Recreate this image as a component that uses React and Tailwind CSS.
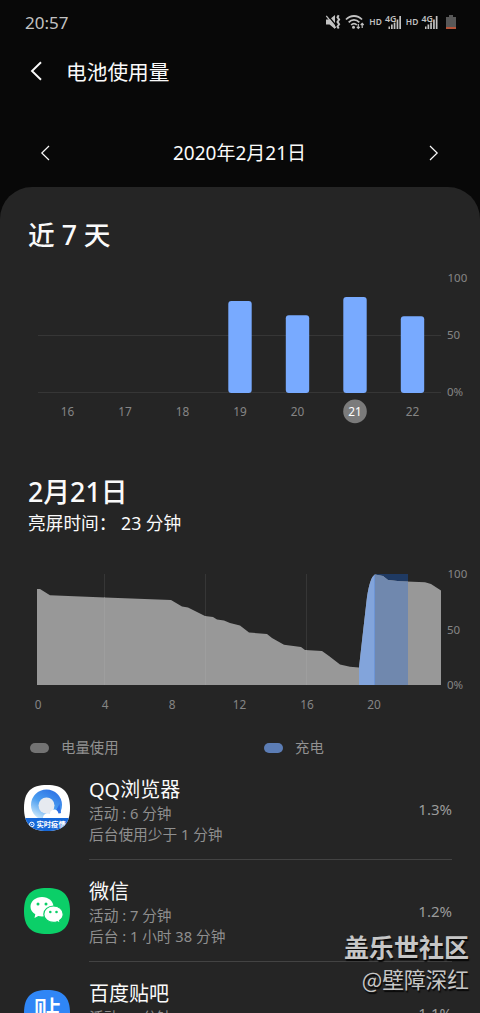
const week = [
  { day: 16, x: 67.5 },
  { day: 17, x: 125 },
  { day: 18, x: 182.5 },
  { day: 19, x: 240, top: 301 },
  { day: 20, x: 297.5, top: 315.3 },
  { day: 21, x: 355, top: 297, active: true },
  { day: 22, x: 412.5, top: 316.3 },
];

const hours = [
  { label: "0", x: 38 },
  { label: "4", x: 105 },
  { label: "8", x: 172 },
  { label: "12", x: 239.5 },
  { label: "16", x: 307 },
  { label: "20", x: 374 },
];

const apps = [
  { name: "QQ浏览器", active: "活动 : 6 分钟", background: "后台使用少于 1 分钟", percent: "1.3%", Icon: QQIcon },
  { name: "微信", active: "活动 : 7 分钟", background: "后台 : 1 小时 38 分钟", percent: "1.2%", Icon: WeChatIcon },
  { name: "百度贴吧", active: "活动 : 2 分钟", percent: "1.1%", Icon: TiebaIcon },
];

export default function App() {
  return (
    <div className="relative w-[480px] h-[1013px] overflow-hidden bg-[#080808] text-[#fafafa] font-['Noto_Sans','Noto_Sans_CJK_SC',sans-serif]">
      <StatusBar />
      <header className="h-12 flex items-center pl-[30px]">
        <Chevron className="w-3 h-5" width={1.9} />
        <h1 className="ml-6 pt-px text-[20.7px] leading-[48px]">电池使用量</h1>
      </header>
      <nav className="mt-[34px] h-12 pb-px flex items-center justify-between pl-10 pr-[41px]">
        <Chevron className="w-[10px] h-4" width={1.5} />
        <span className="text-[19px] leading-[46px]">2020年2月21日</span>
        <Chevron className="w-[10px] h-4 rotate-180" width={1.5} />
      </nav>
      <main className="mt-[10px] rounded-t-[32px] bg-[#252525] h-[826px]">
        <h2 className="pt-[25px] pl-[28px] text-[26.7px] leading-[46px] font-medium">近 7 天</h2>
        <WeekChart />
        <h2 className="mt-[46px] pl-[28px] text-[26.8px] leading-8 font-medium">2月21日</h2>
        <p className="pt-px pl-[28px] text-[17.7px] leading-[29px] whitespace-pre">亮屏时间： 23 分钟</p>
        <DayChart />
        <div className="h-[34px] flex items-center text-[14.4px] text-[#919191]">
          <div className="w-[264px] flex items-center pl-[30px]">
            <i className="w-[19px] h-[10px] rounded-full bg-[#737373]" />
            <span className="ml-3">电量使用</span>
          </div>
          <div className="flex items-center">
            <i className="w-[19px] h-[10px] rounded-full bg-[#5c7db5]" />
            <span className="ml-3">充电</span>
          </div>
        </div>
        <ul className="pt-[11px]">
          {apps.map((app) => (
            <AppRow key={app.name} {...app} />
          ))}
        </ul>
      </main>
      <div className="absolute right-[11px] top-[930px] text-right text-[#c6c6c6] font-['Noto_Sans_CJK_SC',sans-serif] [text-shadow:1px_2px_1px_#080808]">
        <div className="text-[25px] leading-[32px] font-bold">盖乐世社区</div>
        <div className="text-[21.7px] leading-[33px]">@壁障深红</div>
      </div>
    </div>
  );
}

function StatusBar() {
  return (
    <div className="h-[47px] flex justify-between text-[#c2c2c2]">
      <span className="pl-[25px] text-[17px] leading-[45px]">20:57</span>
      <svg width="160" height="47" viewBox="320 0 160 47" fill="none" stroke="currentColor">
        {/* muted, vibrate */}
        <path d="M326 19.5h3.5l5.5-4.5v14l-5.5-4.5H326z" fill="currentColor" stroke="none" />
        <path d="M327.500 15 337 26.500" stroke="#080808" strokeWidth="1.2" />
        <path d="m326.300 15.800 9.500 12" strokeWidth="1.3" />
        <path d="m338.700 15.300-1.200 2 1.600 2.300-1.600 2.300 1.600 2.300-1.600 2.300 1.200 2" strokeWidth="2" />
        {/* wifi */}
        <path d="M346 19.500c4.500-4.700 11.500-4.700 16 0M348.700 22.300c3-3.200 7.600-3.200 10.600 0M351.200 25c1.600-1.700 4-1.700 5.600 0" strokeWidth="1.8" />
        <circle cx="353.5" cy="27.3" r="1.5" fill="currentColor" stroke="none" />
        <path d="M358.300 24v4.300m-1.500-1.500 1.500 1.600 1.500-1.600M362.200 28v-4.600m-1.500 1.600 1.500-1.600 1.500 1.600" strokeWidth="1.2" />
        <Signal x={370} />
        <Signal x={406.5} />
        {/* battery */}
        <path d="M446 17h3v-2h4v2h3v12h-10z" fill="#585858" stroke="none" />
        <path d="M446 27h10v2h-10z" fill="#b6553a" stroke="none" />
      </svg>
    </div>
  );
}

function Signal({ x }) {
  return (
    <g transform={`translate(${x} 0)`} fill="currentColor" stroke="none">
      <text x="-0.7" y="25.2" fontSize="9" fontWeight="600" textLength="12.5" lengthAdjust="spacingAndGlyphs">HD</text>
      <text x="15" y="22" fontSize="9.5" fontWeight="600" textLength="11.5" lengthAdjust="spacingAndGlyphs">4G</text>
      <path d="M18.500 26.500h1.500V29h-1.500zM21 24.500h1.700V29H21zM23.700 22.500h1.700V29h-1.700zM26.600 19.500h1.700V29h-1.700zM29.300 16h1.700v13h-1.700z" />
    </g>
  );
}

function Chevron({ className, width }) {
  return (
    <svg className={className} viewBox="0 0 12 20" fill="none" stroke="#fafafa" strokeWidth={width}>
      <path d="M11 1.200 2 10l9 8.800" />
    </svg>
  );
}

function WeekChart() {
  return (
    <svg width="480" height="172" viewBox="0 258 480 172" className="block" fontSize="11.8" fill="#858585">
      <path d="M38 335.500h403M38 392.500h403" stroke="#363636" />
      <text x="447.5" y="282" fontSize="11.5">100</text>
      <text x="447" y="339" fontSize="11.5">50</text>
      <text x="447" y="396" fontSize="11.5">0%</text>
      {week.map((d) => (
        <g key={d.day}>
          {d.top && <rect x={d.x - 11.7} y={d.top} width="23.4" height={393 - d.top} rx="3" fill="#78aaff" />}
          {d.active && <circle cx={d.x} cy="411.4" r="11.8" fill="#7b7b7b" />}
          <text x={d.x} y="416" textAnchor="middle" fill={d.active ? "#fff" : undefined}>{d.day}</text>
        </g>
      ))}
    </svg>
  );
}

const level =
  "M37 589 L40 589 L50 595.3 L105 597.5 L171 600 L182 606.5 L188 607.5 L205 616 L213 617 L217 619.5 L224 620.5 L230 623 L240 625.5 L249 632.5 L267 634 L272 638 L284 644.8 L301 647 L305 650 L322 651 L329 656 L340 664.5 L350 666.8 L359 667.5 L363 632 L367 597 Q370 577 375 574.5 L383 576 L388 580 L400 581.3 L425 582.2 L431 584 L441 590.5 V685 H37 Z";

function DayChart() {
  return (
    <svg width="480" height="193" viewBox="0 538 480 193" className="block" fontSize="11.8" fill="#858585">
      <defs>
        <clipPath id="level">
          <path d={level} />
        </clipPath>
      </defs>
      <path d="M104.500 574v111M205.500 574v111M306.500 574v111" stroke="#363636" />
      <path d="M375 574h33v111h-33z" fill="#1f3a63" />
      <g clipPath="url(#level)">
        <path d="M37 574h404v111H37z" fill="#989898" />
        <path d="M104.500 574v111M205.500 574v111M306.500 574v111" stroke="#9e9e9e" />
        <path d="M359 574h16v111h-16z" fill="#82a4db" />
        <path d="M375 574h33v111h-33z" fill="#7088ae" />
        <path d="M374.500 574v111" stroke="#6d95d6" />
      </g>
      <text x="447.5" y="578" fontSize="11.5">100</text>
      <text x="447" y="633.5" fontSize="11.5">50</text>
      <text x="447" y="689" fontSize="11.5">0%</text>
      {hours.map((h) => (
        <text key={h.label} x={h.x} y="709" textAnchor="middle">{h.label}</text>
      ))}
    </svg>
  );
}

function AppRow({ name, active, background, percent, Icon }) {
  return (
    <li className="h-[102px] flex pl-6 pr-7">
      <Icon />
      <div className="ml-[19px] h-[84px] flex-1 flex border-b border-[#434343]">
        <div className="pt-px flex-1 text-[14.7px] leading-[21px] text-[#8f8f8f]">
          <div className="text-[20px] leading-[26px] text-[#fafafa]">{name}</div>
          <div>{active}</div>
          {background && <div>{background}</div>}
        </div>
        <span className="text-[15px] leading-[66px] text-[#9b9b9b]">{percent}</span>
      </div>
    </li>
  );
}

const squircle = "M23 0C39 0 46 7 46 23S39 46 23 46 0 39 0 23 7 0 23 0z";

function QQIcon() {
  return (
    <svg className="mt-[9px] shrink-0" width="46" height="46" viewBox="0 0 46 46">
      <defs>
        <clipPath id="sq"><path d={squircle} /></clipPath>
        <linearGradient id="ring" x1="0.8" y1="0" x2="0.25" y2="1">
          <stop offset="0" stopColor="#2b6fe4" />
          <stop offset="0.5" stopColor="#4a9df0" />
          <stop offset="1" stopColor="#d5eefc" />
        </linearGradient>
      </defs>
      <g clipPath="url(#sq)">
        <path d="M0 0h46v46H0z" fill="#fff" />
        <circle cx="22.5" cy="20" r="15.5" fill="url(#ring)" />
        <path d="M29 31l6.500-12 1.500 9z" fill="#2b6fe4" />
        <circle cx="22.5" cy="20.5" r="8" fill="#e6eaf0" />
        <path d="M19 33c0-4 4-5.500 6.500-4.500 2-5.500 8-5.500 9 0 3.500 0 5 2.500 4 5z" fill="#fff" />
        <path d="M0 33h46v13H0z" fill="#1668d8" />
        <circle cx="7.8" cy="39.5" r="2.3" fill="none" stroke="#fff" />
        <circle cx="7.8" cy="39.5" r="0.7" fill="#fff" />
        <text x="12.5" y="42.3" fontSize="7.3" fontWeight="600" fill="#fff">实时疫情</text>
      </g>
    </svg>
  );
}

function WeChatIcon() {
  return (
    <svg className="mt-[10px] shrink-0" width="46" height="46" viewBox="0 0 46 46">
      <path d={squircle} fill="#0bcf68" />
      <path d="M18 9c6.500 0 11.500 4.300 11.500 9.800S24.500 28.500 18 28.500c-1.300 0-2.600-.2-3.700-.5L10.500 30l.8-3.700C8.300 24.500 6.500 21.800 6.500 18.800 6.500 13.300 11.500 9 18 9z" fill="#fff" />
      <circle cx="14" cy="16" r="1.5" fill="#0bcf68" />
      <circle cx="22" cy="16" r="1.5" fill="#0bcf68" />
      <path d="M29.500 18c5.400 0 9.700 3.600 9.700 8.200 0 2.600-1.400 4.700-3.600 6.200l.7 2.900-3.200-1.600c-1.100.4-2.300.6-3.600.6-5.400 0-9.700-3.500-9.700-8.100S24.100 18 29.500 18z" fill="#fff" stroke="#0bcf68" strokeWidth="1.2" />
      <circle cx="26.3" cy="24" r="1.3" fill="#0bcf68" />
      <circle cx="32.5" cy="24" r="1.3" fill="#0bcf68" />
    </svg>
  );
}

function TiebaIcon() {
  return (
    <svg className="mt-[10px] shrink-0" width="46" height="46" viewBox="0 0 46 46">
      <path d={squircle} fill="#2f86f6" />
      <text x="9.5" y="30.5" fontSize="27" fontWeight="500" fill="#fff">贴</text>
    </svg>
  );
}
